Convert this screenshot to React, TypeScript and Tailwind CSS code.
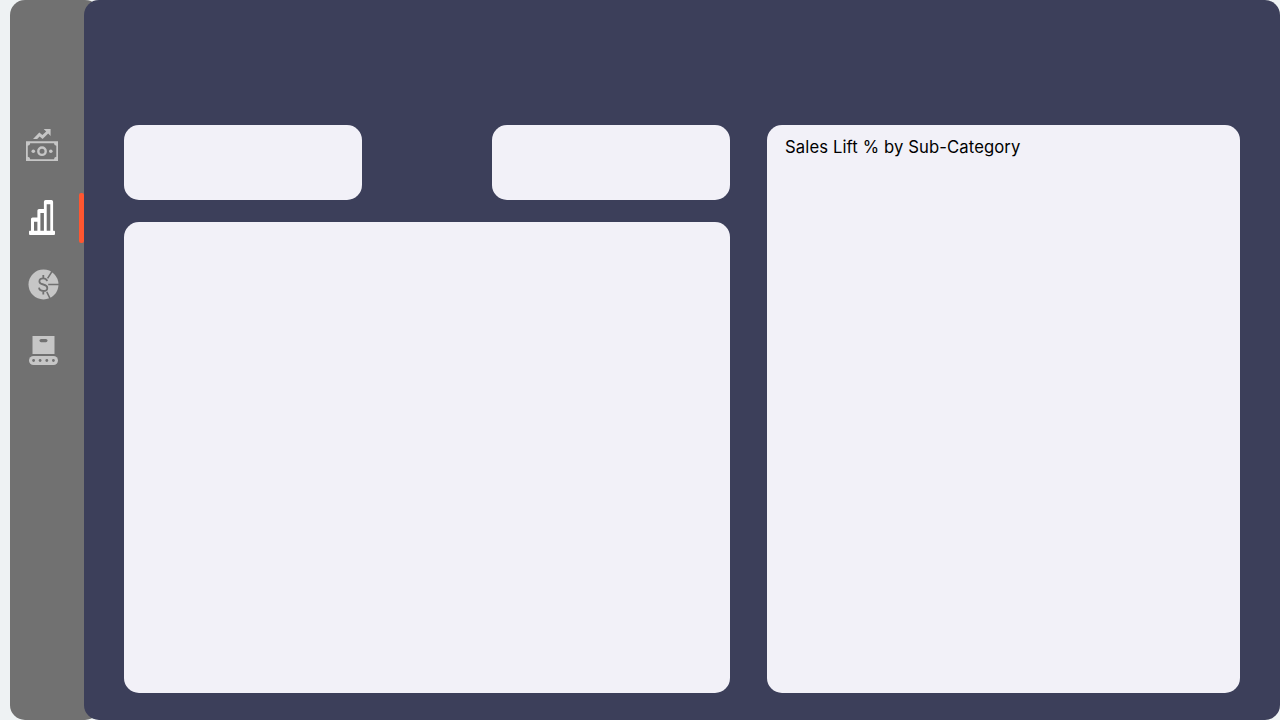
function CashIcon() {
  return (
    <svg className="h-10 w-10" viewBox="22 125 40 40" fill="#c6c6c6">
      <path d="M33 139L39.3 132.4L42.4 134.9L46.2 131.4L43.7 129H50.6V136L48.2 133.6L42.6 139L39.6 136.4L37.2 139Z" />
      <path
        fillRule="evenodd"
        d="M26 141.2H58V161H26ZM30.2 143.2A2.6 2.6 0 0 1 27.8 145.7V156.7A2.6 2.6 0 0 1 30.2 159.2H54A2.6 2.6 0 0 1 56.3 156.7V145.7A2.6 2.6 0 0 1 54 143.2Z"
      />
      <circle cx="42" cy="151.2" r="3.7" fill="none" stroke="#c6c6c6" strokeWidth="2.4" />
      <circle cx="33.3" cy="151.2" r="1.8" />
      <circle cx="50.8" cy="151.2" r="1.8" />
    </svg>
  );
}

function BarsIcon() {
  return (
    <svg className="h-10 w-10" viewBox="22 197 40 40" fill="#ffffff">
      <path
        fillRule="evenodd"
        d="M29.7 230.8H31V219.1Q31 217.5 32.6 217.5H37.4V210.6Q37.4 209 39 209H43.9V201.7Q43.9 200 45.6 200H51.4Q53.1 200 53.1 201.7V230.8H54.2Q55 230.8 55 231.8V234Q55 235 54 235H30Q29 235 29 234V231.8Q29 230.8 29.7 230.8ZM34 221.8V230.8H37.4V221.8ZM40.4 213V230.8H43.9V213ZM46.7 204.2V230.8H50.3V204.2Z"
      />
    </svg>
  );
}

function DollarPieIcon() {
  return (
    <svg className="h-10 w-10" viewBox="22 264 40 40" fill="none">
      <circle cx="43.5" cy="284.5" r="15" fill="#c6c6c6" />
      <g stroke="#717171">
        <path strokeWidth="1.5" d="M47.6 278.3L52.3 271M48.2 284.5H59M46.8 291.8L50.2 298.8" />
        <path
          strokeWidth="1.8"
          d="M47.1 281.2C46.8 279.4 45.4 278.4 43.2 278.4C40.9 278.4 39.4 279.6 39.4 281.4C39.4 283.4 41.1 284 43.3 284.5C45.7 285.1 47.3 285.9 47.3 287.9C47.3 289.8 45.7 291 43.3 291C40.8 291 39.2 289.8 39 287.7M43.3 275V278.4M43.3 291V294.4"
        />
      </g>
    </svg>
  );
}

function ConveyorIcon() {
  return (
    <svg className="h-10 w-10" viewBox="22 330 40 40" fill="#c6c6c6">
      <rect x="32.5" y="336" width="22" height="18" />
      <rect x="39.5" y="339" width="8" height="3.2" rx="1.6" fill="#717171" />
      <rect x="29" y="356" width="29" height="9" rx="4.5" />
      <g fill="#717171">
        <circle cx="33.6" cy="360.5" r="1.4" />
        <circle cx="40.1" cy="360.5" r="1.4" />
        <circle cx="46.8" cy="360.5" r="1.4" />
        <circle cx="53.4" cy="360.5" r="1.4" />
      </g>
    </svg>
  );
}

export default function App() {
  return (
    <div className="flex h-[720px] w-[1280px] overflow-hidden bg-[#eef2f3] pl-[10px] font-['Inter',sans-serif]">
      <nav className="relative flex w-[90px] shrink-0 flex-col rounded-[15px] bg-[#717171] pt-[125px] pl-3">
        <CashIcon />
        <div className="mt-8 mb-[27px]">
          <BarsIcon />
          <span className="absolute top-[193px] left-[69px] z-10 h-[50px] w-[5px] rounded-[2px] bg-[#ff5630] blur-[0.5px]" />
        </div>
        <DollarPieIcon />
        <div className="mt-[26px]">
          <ConveyorIcon />
        </div>
      </nav>
      <main className="relative -ml-4 flex w-[1196px] shrink-0 gap-[37px] rounded-[15px] bg-[#3c3f5a] pt-[125px] pr-10 pb-[27px] pl-10">
        <div className="flex w-[606px] flex-col gap-[22px]">
          <div className="flex justify-between">
            <section className="h-[75px] w-[238px] rounded-[15px] bg-[#f2f1f8]" />
            <section className="h-[75px] w-[238px] rounded-[15px] bg-[#f2f1f8]" />
          </div>
          <section className="flex-1 rounded-[15px] bg-[#f2f1f8]" />
        </div>
        <section className="flex-1 rounded-[15px] bg-[#f2f1f8] pt-[11px] pl-[18px]">
          <h2 className="text-[16.67px] leading-[22px] tracking-[0.11px] whitespace-nowrap text-black">
            Sales Lift % by Sub-Category
          </h2>
        </section>
      </main>
    </div>
  );
}
